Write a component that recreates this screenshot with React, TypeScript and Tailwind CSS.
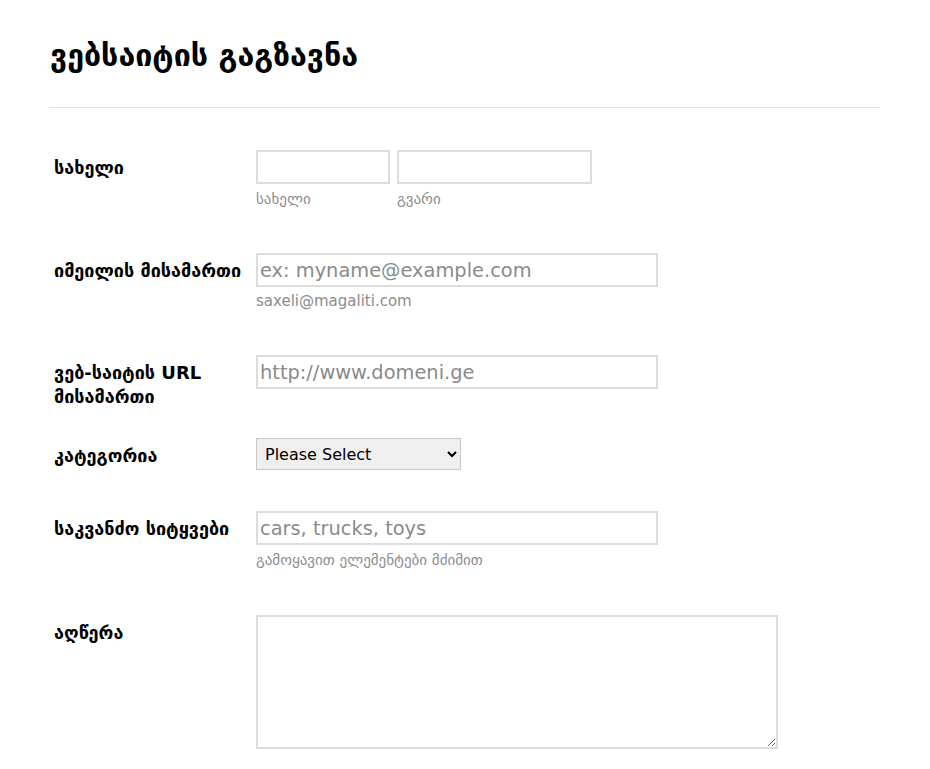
import React from "react";

const font = { fontFamily: '"DejaVu Sans", Verdana, sans-serif' };

function Label({ children }: { children: React.ReactNode }) {
  return (
    <div className="w-[207px] shrink-0 pl-[5px] pt-[6px] text-[18px] font-bold leading-[24px] text-black">
      {children}
    </div>
  );
}

const inputCls =
  "h-[34px] w-[402px] border-2 border-[#dcdcdc] px-[2px] text-[19.4px] text-black outline-none placeholder:text-[#8a8a8a]";

export default function App() {
  return (
    <div className="min-h-[769px] w-[930px] bg-white" style={font}>
      <div className="px-[49px] pt-[31px]">
        <h1 className="pl-[1px] text-[30.4px] font-bold leading-[50px] text-black">ვებსაიტის გაგზავნა</h1>
        <div className="mt-[26px] h-px w-[831px] bg-[#e3e3e3]" />
        <div className="pt-[42px]">
          {/* name */}
          <div className="flex h-[103px]">
            <Label>სახელი</Label>
            <div className="flex gap-[7px]">
              <div className="flex flex-col">
                <input className="h-[34px] w-[134px] border-2 border-[#dcdcdc] outline-none" />
                <span className="mt-[5px] text-[15px] leading-[20px] text-[#8c8c8c]">სახელი</span>
              </div>
              <div className="flex flex-col">
                <input className="h-[34px] w-[195px] border-2 border-[#dcdcdc] outline-none" />
                <span className="mt-[5px] text-[15px] leading-[20px] text-[#8c8c8c]">გვარი</span>
              </div>
            </div>
          </div>
          {/* email */}
          <div className="flex h-[102px]">
            <Label>იმეილის მისამართი</Label>
            <div className="flex flex-col">
              <input placeholder="ex: myname@example.com" className={inputCls} />
              <span className="mt-[4px] text-[15px] leading-[20px] text-[#8c8c8c]">saxeli@magaliti.com</span>
            </div>
          </div>
          {/* url */}
          <div className="flex h-[83px]">
            <Label>
              ვებ-საიტის URL
              <br />
              მისამართი
            </Label>
            <div className="flex flex-col">
              <input placeholder="http://www.domeni.ge" className={inputCls} />
            </div>
          </div>
          {/* category */}
          <div className="flex h-[73px]">
            <Label>კატეგორია</Label>
            <div>
              <select className="h-[32px] w-[205px] border border-[#c8c8c8] bg-[#efefef] pl-[4px] text-[16px] text-black outline-none">
                <option>Please Select</option>
              </select>
            </div>
          </div>
          {/* keywords */}
          <div className="flex h-[104px]">
            <Label>საკვანძო სიტყვები</Label>
            <div className="flex flex-col">
              <input placeholder="cars, trucks, toys" className={inputCls} />
              <span className="mt-[5px] text-[15px] leading-[20px] text-[#8c8c8c]">გამოყავით ელემენტები მძიმით</span>
            </div>
          </div>
          {/* description */}
          <div className="flex">
            <Label>აღწერა</Label>
            <textarea className="h-[134px] w-[522px] border-2 border-[#dcdcdc] outline-none" />
          </div>
        </div>
      </div>
    </div>
  );
}
